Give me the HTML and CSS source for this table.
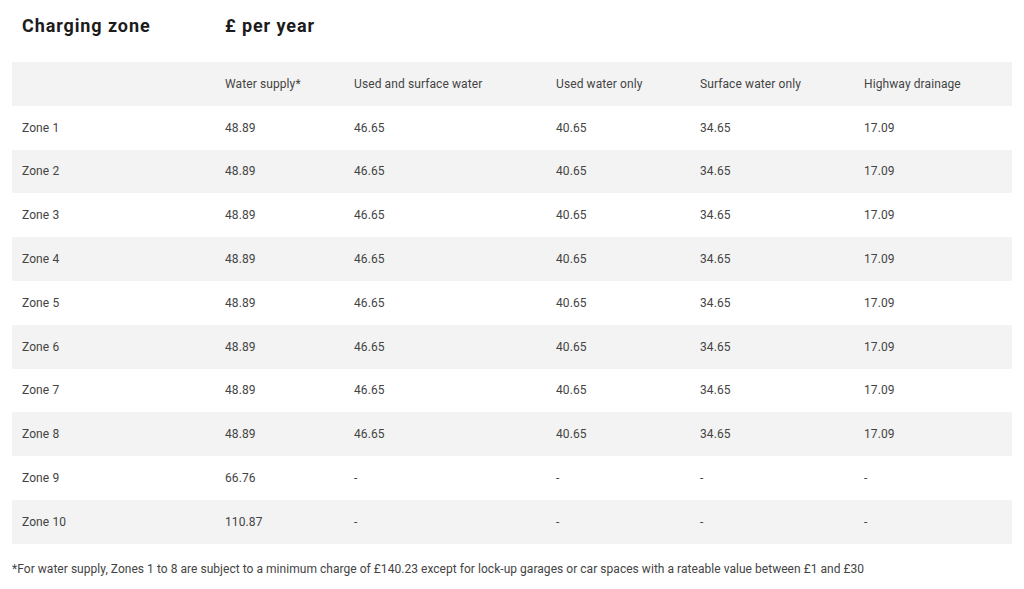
FILE: index.html
```html
<!DOCTYPE html>
<html lang="en">
<head>
<meta charset="utf-8">
<title>Charging zones</title>
<link rel="stylesheet" href="styles.css">
</head>
<body>
<div class="page">
  <div class="titles">
    <h2 class="title title-zone">Charging zone</h2>
    <h2 class="title">£ per year</h2>
  </div>
  <table class="charges">
    <colgroup>
      <col class="c1"><col class="c2"><col class="c3"><col class="c4"><col class="c5"><col class="c6">
    </colgroup>
    <thead>
      <tr><th></th><th>Water supply*</th><th>Used and surface water</th><th>Used water only</th><th>Surface water only</th><th>Highway drainage</th></tr>
    </thead>
    <tbody>
      <tr><td>Zone 1</td><td>48.89</td><td>46.65</td><td>40.65</td><td>34.65</td><td>17.09</td></tr>
      <tr><td>Zone 2</td><td>48.89</td><td>46.65</td><td>40.65</td><td>34.65</td><td>17.09</td></tr>
      <tr><td>Zone 3</td><td>48.89</td><td>46.65</td><td>40.65</td><td>34.65</td><td>17.09</td></tr>
      <tr><td>Zone 4</td><td>48.89</td><td>46.65</td><td>40.65</td><td>34.65</td><td>17.09</td></tr>
      <tr><td>Zone 5</td><td>48.89</td><td>46.65</td><td>40.65</td><td>34.65</td><td>17.09</td></tr>
      <tr><td>Zone 6</td><td>48.89</td><td>46.65</td><td>40.65</td><td>34.65</td><td>17.09</td></tr>
      <tr><td>Zone 7</td><td>48.89</td><td>46.65</td><td>40.65</td><td>34.65</td><td>17.09</td></tr>
      <tr><td>Zone 8</td><td>48.89</td><td>46.65</td><td>40.65</td><td>34.65</td><td>17.09</td></tr>
      <tr><td>Zone 9</td><td>66.76</td><td>-</td><td>-</td><td>-</td><td>-</td></tr>
      <tr><td>Zone 10</td><td>110.87</td><td>-</td><td>-</td><td>-</td><td>-</td></tr>
    </tbody>
  </table>
  <p class="note">*For water supply, Zones 1 to 8 are subject to a minimum charge of £140.23 except for lock-up garages or car spaces with a rateable value between £1 and £30</p>
</div>
</body>
</html>
```

FILE: styles.css
```css
html, body {
  margin: 0;
  padding: 0;
  background: #ffffff;
}

body {
  font-family: Roboto, "Liberation Sans", sans-serif;
  color: #444444;
}

.page {
  padding: 0 12px;
}

.titles {
  display: flex;
  align-items: center;
  height: 62px;
  box-sizing: border-box;
}

.title {
  margin: 0;
  font-size: 18px;
  font-weight: 700;
  color: #1c1c1c;
  letter-spacing: 0.9px;
  padding-left: 10px;
  position: relative;
  top: -6px;
}

.title-zone {
  width: 193px;
}

.charges {
  width: 1000px;
  border-collapse: collapse;
  table-layout: fixed;
  font-size: 12px;
}

.c1 { width: 203px; }
.c2 { width: 129px; }
.c3 { width: 202px; }
.c4 { width: 144px; }
.c5 { width: 164px; }
.c6 { width: 158px; }

.charges th,
.charges td {
  text-align: left;
  font-weight: 400;
  padding: 0 0 0 10px;
  height: 43.8px;
  box-sizing: border-box;
  white-space: nowrap;
  letter-spacing: 0.1px;
}

.charges thead tr,
.charges tbody tr:nth-child(even) {
  background: #f3f3f3;
}

.note {
  margin: 18px 0 0;
  font-size: 12px;
  color: #444444;
  letter-spacing: 0.04px;
}
```
